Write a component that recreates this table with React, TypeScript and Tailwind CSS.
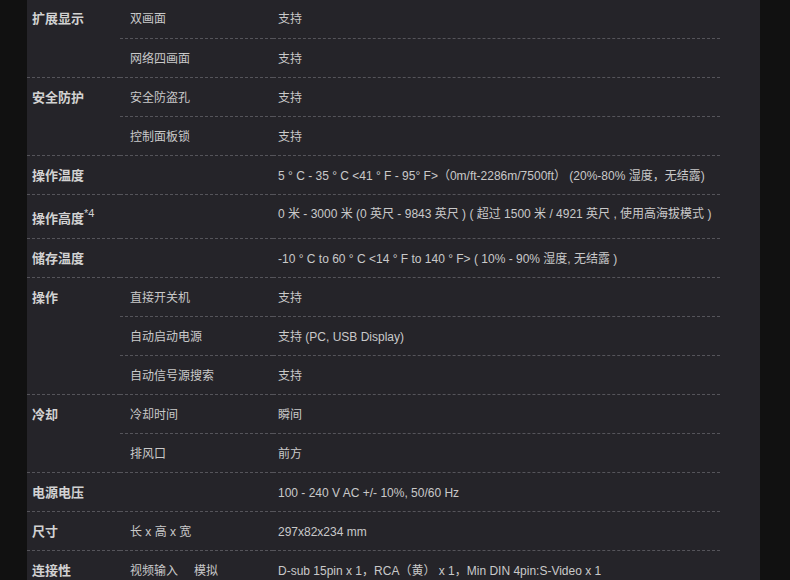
import React from "react";

type Sub = { name: React.ReactNode; value: React.ReactNode };
type Group = { label: React.ReactNode; subs: Sub[]; tall?: boolean };

const groups: Group[] = [
  { label: "扩展显示", subs: [{ name: "双画面", value: "支持" }, { name: "网络四画面", value: "支持" }] },
  { label: "安全防护", subs: [{ name: "安全防盗孔", value: "支持" }, { name: "控制面板锁", value: "支持" }] },
  {
    label: "操作温度",
    subs: [{ name: "", value: "5 ° C - 35 ° C <41 ° F - 95° F>（0m/ft-2286m/7500ft） (20%-80% 湿度，无结露)" }],
  },
  {
    label: (
      <>
        操作高度<sup className="text-[11px] font-normal">*4</sup>
      </>
    ),
    tall: true,
    subs: [{ name: "", value: "0 米 - 3000 米 (0 英尺 - 9843 英尺 ) ( 超过 1500 米 / 4921 英尺 , 使用高海拔模式 )" }],
  },
  {
    label: "储存温度",
    subs: [{ name: "", value: "-10 ° C to 60 ° C <14 ° F to 140 ° F> ( 10% - 90% 湿度, 无结露 )" }],
  },
  {
    label: "操作",
    subs: [
      { name: "直接开关机", value: "支持" },
      { name: "自动启动电源", value: "支持 (PC, USB Display)" },
      { name: "自动信号源搜索", value: "支持" },
    ],
  },
  { label: "冷却", subs: [{ name: "冷却时间", value: "瞬间" }, { name: "排风口", value: "前方" }] },
  { label: "电源电压", subs: [{ name: "", value: "100 - 240 V AC +/- 10%, 50/60 Hz" }] },
  { label: "尺寸", subs: [{ name: "长 x 高 x 宽", value: "297x82x234 mm" }] },
  {
    label: "连接性",
    subs: [
      {
        name: (
          <>
            视频输入<span className="ml-[16px]">模拟</span>
          </>
        ),
        value: "D-sub 15pin x 1，RCA（黄） x 1，Min DIN 4pin:S-Video x 1",
      },
    ],
  },
];

const line = "border-b border-dashed border-[#55545a] p-0";

export default function App() {
  return (
    <div
      className="min-h-screen bg-[#111111] text-[12px] text-[#c9c9c9]"
      style={{ fontFamily: '"Liberation Sans", Arial, "Noto Sans CJK SC", sans-serif' }}
    >
      <div className="ml-[27px] w-[733px] min-h-screen bg-[#252429] overflow-hidden">
        <table className="-mt-px w-[693px] border-collapse table-fixed">
          <colgroup>
            <col className="w-[93px]" />
            <col className="w-[153px]" />
            <col />
          </colgroup>
          <tbody>
            {groups.map((g, gi) =>
              g.subs.map((s, si) => (
                <tr key={`${gi}-${si}`}>
                  {si === 0 && (
                    <td
                      rowSpan={g.subs.length}
                      className={`${line} align-top pl-[5px] ${g.tall ? "pt-[16px]" : "pt-[12px]"} text-[13px] font-bold text-[#d2d2d2] leading-[15px]`}
                    >
                      {g.label}
                    </td>
                  )}
                  <td className={`${line} ${g.tall ? "h-[44px]" : "h-[39px] pt-[2px]"} align-middle pl-[10px]`}>
                    {s.name}
                  </td>
                  <td className={`${line} ${g.tall ? "h-[44px] pb-[4px]" : "h-[39px] pt-[2px]"} align-middle pl-[5px]`}>
                    {s.value}
                  </td>
                </tr>
              ))
            )}
          </tbody>
        </table>
      </div>
    </div>
  );
}
